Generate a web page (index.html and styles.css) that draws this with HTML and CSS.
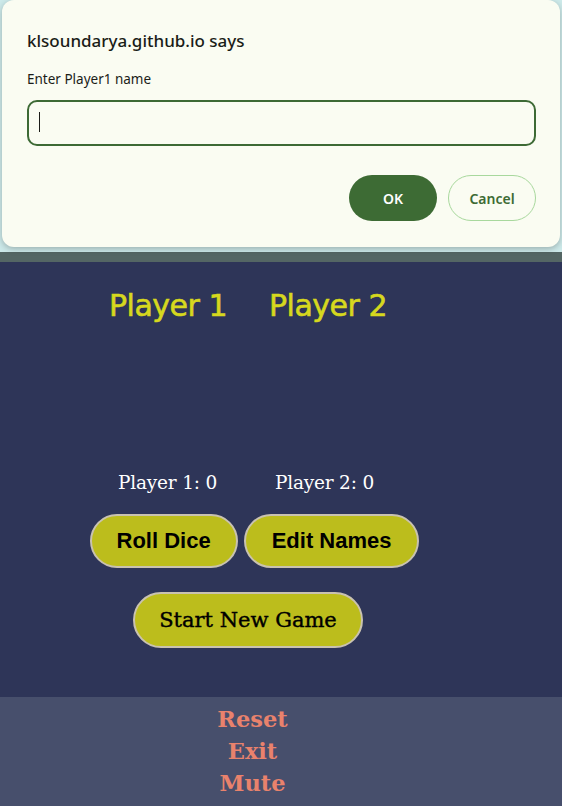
FILE: index.html
```html
<!DOCTYPE html>
<html>
<head>
<meta charset="utf-8">
<link rel="stylesheet" href="styles.css">
</head>
<body>
<div class="top"></div>
<div class="strip"></div>
<main class="game">
  <div class="names">
    <span class="pname">Player 1</span>
    <span class="pname">Player 2</span>
  </div>
  <div class="scores">
    <span>Player 1: 0</span>
    <span>Player 2: 0</span>
  </div>
  <div class="row">
    <button class="btn sans">Roll Dice</button>
    <button class="btn sans">Edit Names</button>
  </div>
  <div class="row">
    <button class="btn serif big">Start New Game</button>
  </div>
</main>
<footer class="foot">
  <a>Reset</a>
  <a>Exit</a>
  <a>Mute</a>
</footer>
<div class="dialog">
  <div class="title">klsoundarya.github.io says</div>
  <div class="msg">Enter Player1 name</div>
  <div class="input"><span class="caret"></span></div>
  <div class="actions">
    <button class="ok">OK</button>
    <button class="cancel">Cancel</button>
  </div>
</div>
</body>
</html>
```
FILE: styles.css
```css
html, body { margin: 0; padding: 0; }
body { width: 562px; height: 806px; overflow: hidden; position: relative; background: #2e3558; }
.top { height: 252px; background: #cdeaea; }
.strip { height: 10px; background: #546664; }
.game { height: 435px; background: #2e3558; width: 500px; display: flex; flex-direction: column; align-items: center; }
.names { display: flex; gap: 42px; margin-top: 26px; margin-left: -4px; }
.pname { font-family: "Comic Sans MS", "DejaVu Sans", sans-serif; font-size: 30px; font-weight: normal; color: #d6d81e; letter-spacing: -0.5px; -webkit-text-stroke: 0.6px #d6d81e; }
.scores { display: flex; gap: 58px; margin-top: 149px; margin-left: -8px; font-family: "DejaVu Serif", serif; font-size: 18.5px; color: #fff; letter-spacing: -0.2px; }
.row { display: flex; gap: 6px; margin-top: 21px; margin-left: 9px; }
.row + .row { margin-top: 24px; margin-left: -4px; }
.btn { background: #bcbd1c; border: 2px solid #c9c2b0; border-radius: 30px; color: #000; height: 54px; padding: 0 25px; }
.sans { font-family: "Liberation Sans", Arial, sans-serif; font-weight: bold; font-size: 22px; }
.sans + .sans { padding: 0 26px; }
.serif { font-family: "DejaVu Serif", serif; font-size: 21px; font-weight: normal; -webkit-text-stroke: 0.4px #000; }
.big { height: 56px; padding: 0 24px; }
.foot { height: 109px; width: 505px; background: #474f6c; display: flex; flex-direction: column; align-items: center; padding-top: 6px; box-sizing: border-box; font-family: "DejaVu Serif", serif; font-weight: bold; font-size: 22.5px; color: #e9826c; line-height: 32px; box-shadow: 57px 0 0 #474f6c; }
.dialog { position: absolute; left: 2px; top: 0; width: 558px; height: 247px; box-sizing: border-box; background: #fafcf2; border-radius: 12px; box-shadow: 0 2px 6px rgba(0,0,0,0.25); padding: 26px 24px 0 25px; font-family: "Noto Sans", "Open Sans", sans-serif; color: #1b1c18; }
.title { font-size: 17px; line-height: 30px; font-weight: 500; }
.msg { font-size: 13.5px; margin-top: 14px; line-height: 18px; }
.input { margin-top: 12px; height: 46px; box-sizing: border-box; border: 2.5px solid #3d6a35; border-radius: 10px; position: relative; }
.caret { position: absolute; left: 10px; top: 10px; width: 1px; height: 20px; background: #1b1c18; }
.actions { display: flex; justify-content: flex-end; gap: 11px; margin-top: 29px; }
.ok, .cancel { height: 46px; width: 88px; border-radius: 23px; font-family: "Noto Sans", "Open Sans", sans-serif; font-size: 14px; font-weight: 600; }
.ok { background: #3d6b34; color: #fff; border: none; }
.cancel { background: transparent; color: #3d6b34; border: 1px solid #a8d89d; }
```
